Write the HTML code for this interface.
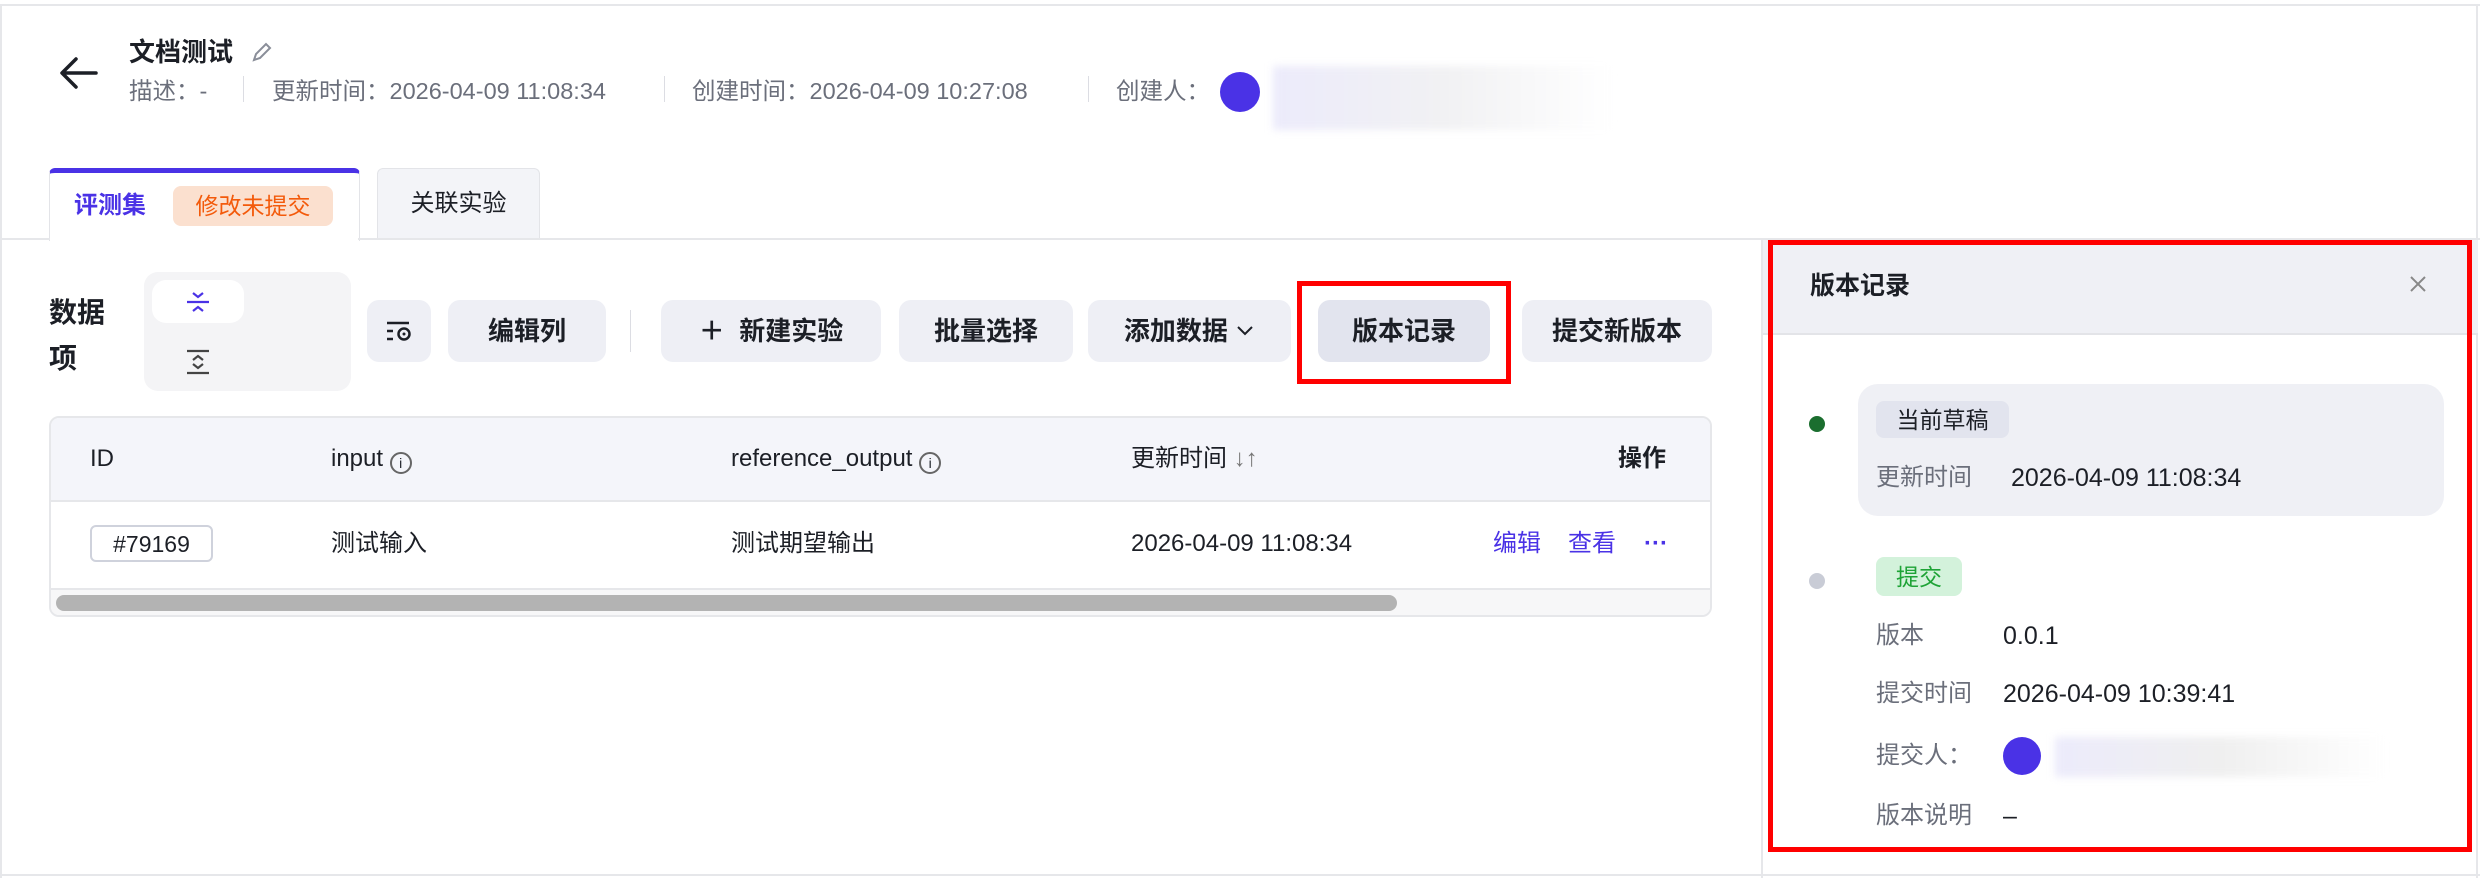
<!DOCTYPE html>
<html><head><meta charset="utf-8"><style>
*{margin:0;padding:0;box-sizing:border-box}
body{width:2480px;height:878px;background:#fff;font-family:"Liberation Sans","Noto Sans CJK SC",sans-serif;color:#1c1f26;position:relative;overflow:hidden}
.a{position:absolute;white-space:nowrap;line-height:36px}
.btn{position:absolute;top:300px;height:62px;background:#eeeff5;border-radius:12px;font-size:26px;font-weight:bold;color:#1c1f26;display:flex;align-items:center;justify-content:center;line-height:36px}
.meta{font-size:23.5px;color:#6b6f7b;top:73px}
.sep{position:absolute;top:76px;width:1px;height:26px;background:#dcdde3}
.th{font-size:24px;top:441px}
.td{font-size:24px;top:526px}
.lbl{font-size:24px;color:#6b6f7b}
.val{font-size:25px;color:#1c1f26}
</style></head><body>
<div class="a" style="left:0;top:4px;width:2480px;height:2px;background:#e6e7ea"></div>
<div class="a" style="left:0;top:4px;width:2px;height:874px;background:#e6e7ea"></div>
<div class="a" style="left:0;top:874px;width:2480px;height:2px;background:#e6e7ea"></div>
<div class="a" style="left:2476px;top:4px;width:2px;height:874px;background:#e6e7ea"></div>

<svg class="a" style="left:58px;top:56px" width="42" height="34" viewBox="0 0 42 34"><path d="M38 17H5M18 3L4 17l14 14" fill="none" stroke="#1c1f26" stroke-width="3.5" stroke-linecap="round" stroke-linejoin="round"/></svg>
<div class="a" style="left:129px;top:34px;font-size:26px;font-weight:bold">文档测试</div>
<svg class="a" style="left:250px;top:40px" width="24" height="24" viewBox="0 0 24 24"><path d="M4 20l2-6L16 4l4 4L10 18z" fill="none" stroke="#8a8e99" stroke-width="2"/></svg>
<div class="a meta" style="left:129px">描述：-</div>
<div class="sep" style="left:243px"></div>
<div class="a meta" style="left:272px">更新时间：2026-04-09 11:08:34</div>
<div class="sep" style="left:664px"></div>
<div class="a meta" style="left:692px">创建时间：2026-04-09 10:27:08</div>
<div class="sep" style="left:1088px"></div>
<div class="a meta" style="left:1116px">创建人：</div>
<div class="a" style="left:1220px;top:72px;width:40px;height:40px;border-radius:50%;background:#4a32e6"></div>
<div class="a" style="left:1273px;top:66px;width:340px;height:64px;background:linear-gradient(90deg,#ecebfb,#f1f1f3 50%,#fff);filter:blur(4px)"></div>

<div class="a" style="left:49px;top:168px;width:311px;height:73px;background:#fff;border:1px solid #e3e4e8;border-bottom:none;border-top:5px solid #4a32e6;border-radius:6px 6px 0 0"></div>
<div class="a" style="left:74px;top:188px;font-size:24px;color:#4a32e6;font-weight:bold">评测集</div>
<div class="a" style="left:173px;top:186px;width:160px;height:40px;background:#fbe0cf;border-radius:8px;color:#f35a0b;font-size:23px;display:flex;align-items:center;justify-content:center">修改未提交</div>
<div class="a" style="left:377px;top:168px;width:163px;height:71px;background:#f3f4f8;border:1px solid #e3e4e8;border-bottom:none;border-radius:6px 6px 0 0;font-size:24px;display:flex;align-items:center;justify-content:center">关联实验</div>
<div class="a" style="left:0;top:238px;width:2480px;height:2px;background:#e6e7ea"></div>
<div class="a" style="left:50px;top:237px;width:308px;height:4px;background:#fff"></div>

<div class="a" style="left:49px;top:290px;font-size:28px;font-weight:bold;line-height:46px">数据<br>项</div>
<div class="a" style="left:144px;top:272px;width:207px;height:119px;background:#f4f4f6;border-radius:14px"></div>
<div class="a" style="left:152px;top:280px;width:92px;height:43px;background:#fff;border-radius:14px"></div>
<svg class="a" style="left:184px;top:290px" width="28" height="24" viewBox="0 0 28 24"><path d="M3 12h22M9 3l5 4 5-4M9 21l5-4 5 4" fill="none" stroke="#4a32e6" stroke-width="2.2"/></svg>
<svg class="a" style="left:184px;top:348px" width="28" height="28" viewBox="0 0 28 28"><path d="M3 3h22M3 25h22M9 12l5-4 5 4M9 16l5 4 5-4" fill="none" stroke="#444" stroke-width="2.2"/></svg>
<div class="btn" style="left:367px;width:64px"><svg width="28" height="24" viewBox="0 0 28 24"><path d="M2 4h22M2 12h6M2 20h6" stroke="#1c1f26" stroke-width="2.5"/><circle cx="19" cy="15" r="5.5" fill="none" stroke="#1c1f26" stroke-width="2.5"/><circle cx="19" cy="15" r="1.5" fill="#1c1f26"/></svg></div>
<div class="btn" style="left:448px;width:158px">编辑列</div>
<div class="a" style="left:630px;top:310px;width:1px;height:42px;background:#dcdde3"></div>
<div class="btn" style="left:661px;width:220px">＋&nbsp;&nbsp;新建实验</div>
<div class="btn" style="left:899px;width:174px">批量选择</div>
<div class="btn" style="left:1088px;width:203px">添加数据&nbsp;<svg width="20" height="14" viewBox="0 0 20 14"><path d="M3 3l7 7 7-7" fill="none" stroke="#1c1f26" stroke-width="2"/></svg></div>
<div class="btn" style="left:1318px;width:172px;background:#e2e4ee">版本记录</div>
<div class="a" style="left:1297px;top:281px;width:214px;height:103px;border:5px solid #f00"></div>
<div class="btn" style="left:1522px;width:190px">提交新版本</div>

<div class="a" style="left:49px;top:416px;width:1663px;height:201px;border:2px solid #e6e7ea;border-radius:10px;overflow:hidden">
<div style="position:absolute;left:0;top:0;width:100%;height:84px;background:#f4f5fa;border-bottom:2px solid #e6e7ea"></div>
<div style="position:absolute;left:0;top:170px;width:100%;height:29px;background:#f7f7f8;border-top:2px solid #e6e7ea"></div>
<div style="position:absolute;left:5px;top:177px;width:1341px;height:16px;background:#b3b3b3;border-radius:8px"></div>
</div>
<div class="a th" style="left:90px">ID</div>
<div class="a th" style="left:331px">input <span style="display:inline-block;width:22px;height:22px;border:2px solid #666;border-radius:50%;font-size:14px;text-align:center;line-height:18px;vertical-align:-2px">i</span></div>
<div class="a th" style="left:731px">reference_output <span style="display:inline-block;width:22px;height:22px;border:2px solid #666;border-radius:50%;font-size:14px;text-align:center;line-height:18px;vertical-align:-2px">i</span></div>
<div class="a th" style="left:1131px">更新时间 <span style="color:#777">↓↑</span></div>
<div class="a th" style="left:1618px;font-weight:bold">操作</div>
<div class="a" style="left:90px;top:525px;width:123px;height:37px;border:2px solid #cfd2dc;border-radius:6px;font-size:23px;display:flex;align-items:center;justify-content:center">#79169</div>
<div class="a td" style="left:331px">测试输入</div>
<div class="a td" style="left:731px">测试期望输出</div>
<div class="a td" style="left:1131px">2026-04-09 11:08:34</div>
<div class="a td" style="left:1493px;color:#4a32e6">编辑</div>
<div class="a td" style="left:1568px;color:#4a32e6">查看</div>
<div class="a td" style="left:1644px;color:#4a32e6;font-weight:bold">···</div>

<div class="a" style="left:1761px;top:238px;width:2px;height:640px;background:#e6e7ea"></div>
<div class="a" style="left:1763px;top:240px;width:715px;height:95px;background:#eff0f5;border-bottom:2px solid #e3e4e8"></div>
<div class="a" style="left:1810px;top:268px;font-size:25px;font-weight:bold">版本记录</div>
<svg class="a" style="left:2408px;top:274px" width="20" height="20" viewBox="0 0 20 20"><path d="M3 3l14 14M17 3L3 17" stroke="#888" stroke-width="2"/></svg>
<div class="a" style="left:1809px;top:416px;width:16px;height:16px;border-radius:50%;background:#1b6e2f"></div>
<div class="a" style="left:1858px;top:384px;width:586px;height:132px;background:#eff0f5;border-radius:20px"></div>
<div class="a" style="left:1876px;top:401px;width:133px;height:37px;background:#e2e4ee;border-radius:8px;font-size:23px;display:flex;align-items:center;justify-content:center">当前草稿</div>
<div class="a lbl" style="left:1876px;top:460px">更新时间</div>
<div class="a val" style="left:2011px;top:460px">2026-04-09 11:08:34</div>
<div class="a" style="left:1809px;top:573px;width:16px;height:16px;border-radius:50%;background:#c9ccd6"></div>
<div class="a" style="left:1876px;top:557px;width:86px;height:39px;background:#d3f2db;border-radius:8px;font-size:23px;color:#1ea336;display:flex;align-items:center;justify-content:center">提交</div>
<div class="a lbl" style="left:1876px;top:618px">版本</div>
<div class="a val" style="left:2003px;top:618px">0.0.1</div>
<div class="a lbl" style="left:1876px;top:676px">提交时间</div>
<div class="a val" style="left:2003px;top:676px">2026-04-09 10:39:41</div>
<div class="a lbl" style="left:1876px;top:738px">提交人：</div>
<div class="a" style="left:2003px;top:737px;width:38px;height:38px;border-radius:50%;background:#4a32e6"></div>
<div class="a" style="left:2055px;top:737px;width:330px;height:40px;background:linear-gradient(90deg,#ecebfb,#efefef 50%,#fff);filter:blur(4px)"></div>
<div class="a lbl" style="left:1876px;top:798px">版本说明</div>
<div class="a val" style="left:2003px;top:798px">–</div>
<div class="a" style="left:1768px;top:240px;width:704px;height:612px;border:5px solid #f00"></div>
</body></html>
